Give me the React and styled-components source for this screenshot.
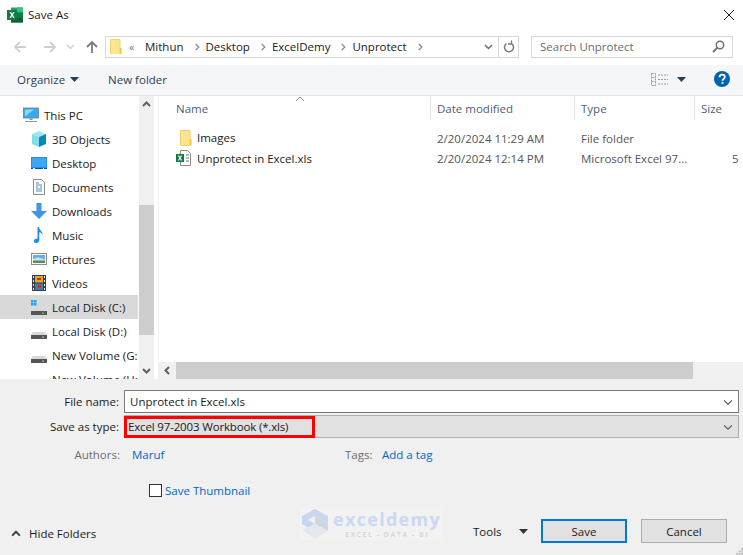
import styled, { createGlobalStyle } from "styled-components";

const Global = createGlobalStyle`
  html, body {
    margin: 0;
    padding: 0;
    background: #fff;
  }
  * {
    box-sizing: border-box;
  }
  svg {
    flex: none;
  }
`;

const Dialog = styled.div`
  position: relative;
  width: 743px;
  height: 555px;
  overflow: hidden;
  display: flex;
  flex-direction: column;
  background: #fff;
  color: #1a1a1a;
  font-family: "Open Sans", "Noto Sans", sans-serif;
  font-size: 11.5px;
`;

const TitleBar = styled.div`
  height: 32px;
  flex: none;
  display: flex;
  align-items: center;
  padding: 0 7px 3px;
  gap: 5px;
  font-size: 11.5px;
`;

const Close = styled.svg`
  margin-left: auto;
  margin-right: 1px;
`;

const NavBar = styled.div`
  height: 33px;
  flex: none;
  display: flex;
  align-items: center;
  padding: 0 10px 4px 12px;
`;

const NavIcons = styled.div`
  width: 93px;
  flex: none;
  display: flex;
  align-items: center;
`;

const Spacer = styled.span`
  width: ${(props) => props.$w}px;
  flex: none;
`;

const AddressBox = styled.div`
  width: 414px;
  height: 22px;
  flex: none;
  display: flex;
  align-items: center;
  border: 1px solid #d9d9d9;
  padding-left: 4px;
`;

const Crumb = styled.span`
  display: inline-flex;
  align-items: center;
`;

const CrumbLabel = styled.span`
  margin-right: 9px;
`;

const Chevron = styled.span`
  width: 13px;
  display: inline-flex;
  color: #777;
`;

const Overflow = styled.span`
  width: 16px;
  margin-left: 2px;
  font-size: 11px;
  color: #777;
`;

const AddressEnd = styled.div`
  margin-left: auto;
  height: 100%;
  display: flex;
  align-items: center;
`;

const Refresh = styled.div`
  width: 20px;
  height: 100%;
  border-left: 1px solid #d9d9d9;
  display: flex;
  align-items: center;
  justify-content: center;
  margin-left: 5px;
`;

const SearchBox = styled.div`
  width: 202px;
  height: 22px;
  flex: none;
  margin-left: 12px;
  display: flex;
  align-items: center;
  justify-content: space-between;
  border: 1px solid #d9d9d9;
  padding: 0 7px 0 8px;
  color: #6d6d6d;
`;

const Toolbar = styled.div`
  height: 31px;
  flex: none;
  display: flex;
  align-items: center;
  background: #f5f6f7;
  border-bottom: 1px solid #e5e5e5;
  padding: 0 13px 2px 17px;
  color: #263f5c;
`;

const ToolLabel = styled.span`
  margin-right: ${(props) => props.$right || 0}px;
  margin-left: ${(props) => props.$left || 0}px;
`;

const ToolEnd = styled.div`
  margin-left: auto;
  display: flex;
  align-items: center;
`;

const Browser = styled.div`
  height: 283px;
  flex: none;
  display: flex;
`;

const Sidebar = styled.div`
  width: 139px;
  flex: none;
  overflow: hidden;
  padding-top: 7px;
`;

const SideItem = styled.div`
  width: 138px;
  height: 24px;
  display: flex;
  align-items: center;
  padding-left: ${(props) => (props.$root ? 23 : 31)}px;
  gap: 5px;
  white-space: nowrap;
  overflow: hidden;
  background: ${(props) => (props.$active ? "#d9d9d9" : "transparent")};
`;

const VScroll = styled.div`
  width: 15px;
  flex: none;
  display: flex;
  flex-direction: column;
  align-items: center;
  background: #f0f0f0;
`;

const VThumb = styled.div`
  width: 100%;
  height: 130px;
  margin-top: 92px;
  background: #cdcdcd;
`;

const ScrollBtn = styled.div`
  height: 17px;
  width: 100%;
  flex: none;
  display: flex;
  align-items: center;
  justify-content: center;
  margin-top: ${(props) => (props.$end ? "auto" : 0)};
`;

const Main = styled.div`
  flex: 1;
  min-width: 0;
  margin-left: 4px;
  border-left: 1px solid #f0f0f0;
  display: flex;
  flex-direction: column;
`;

const HeaderRow = styled.div`
  position: relative;
  height: 24px;
  flex: none;
  display: flex;
  color: #4c607a;
`;

const SortCaret = styled.svg`
  position: absolute;
  left: 136px;
  top: 0;
`;

const HeaderCell = styled.div`
  width: ${(props) => props.$w}px;
  flex: none;
  display: flex;
  align-items: center;
  padding-left: ${(props) => props.$pad}px;
  border-right: ${(props) => (props.$last ? "none" : "1px solid #e5e5e5")};
`;

const FileList = styled.div`
  flex: 1;
  padding-top: 8px;
`;

const FileRow = styled.div`
  height: 20px;
  display: flex;
  align-items: center;
  white-space: nowrap;
`;

const FileCell = styled.div`
  width: ${(props) => props.$w}px;
  flex: none;
  display: flex;
  align-items: center;
  gap: 5px;
  padding-left: ${(props) => props.$pad}px;
  color: ${(props) => props.$color || "#1a1a1a"};
  overflow: hidden;
`;

const HScroll = styled.div`
  height: 17px;
  flex: none;
  display: flex;
  align-items: center;
  background: #f0f0f0;
`;

const HThumb = styled.div`
  width: 517px;
  height: 100%;
  background: #cdcdcd;
`;

const HBtn = styled.div`
  width: 17px;
  height: 100%;
  flex: none;
  display: flex;
  align-items: center;
  justify-content: center;
`;

const Footer = styled.div`
  flex: 1;
  background: #f0f0f0;
  padding-top: 11px;
`;

const FormRow = styled.div`
  height: 23px;
  display: flex;
  align-items: center;
  margin-bottom: 2px;
`;

const FormLabel = styled.label`
  width: 119px;
  flex: none;
  text-align: right;
`;

const Field = styled.div`
  position: relative;
  width: 615px;
  height: 23px;
  margin-left: 5px;
  display: flex;
  align-items: center;
  justify-content: space-between;
  padding: 0 5px 0 ${(props) => (props.$select ? 3 : 5)}px;
  background: ${(props) => (props.$select ? "#e1e1e1" : "#fff")};
  border: 1px solid ${(props) => (props.$select ? "#adadad" : "#7a7a7a")};
`;

const SelectValue = styled.span`
  letter-spacing: -0.16px;
`;

const Callout = styled.div`
  position: absolute;
  left: -1px;
  top: 0;
  width: 191px;
  height: 22px;
  border: 3px solid #fe0000;
`;

const MetaRow = styled.div`
  height: 18px;
  margin-top: 7px;
  display: flex;
  align-items: center;
  color: #6d6d6d;
`;

const MetaLabel = styled.span`
  width: ${(props) => props.$w}px;
  flex: none;
  text-align: ${(props) => props.$align || "right"};
`;

const MetaLink = styled.span`
  width: ${(props) => props.$w}px;
  flex: none;
  margin-left: ${(props) => props.$gap}px;
  color: #0066cc;
`;

const ThumbRow = styled.div`
  height: 18px;
  margin-top: 18px;
  padding-left: 149px;
  display: flex;
  align-items: center;
  gap: 3px;
  color: #0066cc;
`;

const CheckBox = styled.span`
  width: 13px;
  height: 13px;
  background: #fff;
  border: 1px solid #333;
`;

const BottomBar = styled.div`
  height: 24px;
  margin-top: 20px;
  display: flex;
  align-items: center;
  padding-left: 11px;
`;

const HideFolders = styled.div`
  display: flex;
  align-items: center;
  gap: 8px;
  margin-top: 5px;
  width: 95px;
  flex: none;
  white-space: nowrap;
`;

const ToolsMenu = styled.div`
  margin-left: 367px;
  width: 68px;
  flex: none;
  display: flex;
  align-items: center;
  gap: 17px;
`;

const Button = styled.button`
  width: 86px;
  height: 24px;
  flex: none;
  margin-right: 14px;
  padding: 0;
  font: inherit;
  color: #1a1a1a;
  background: #e1e1e1;
  border: ${(props) => (props.$primary ? "2px solid #0078d7" : "1px solid #adadad")};
`;

const Watermark = styled.div`
  position: absolute;
  left: 300px;
  top: 508px;
  width: 142px;
  height: 32px;
  display: flex;
  align-items: center;
  gap: 3px;
  background: #f2f2f2;
`;

const WatermarkText = styled.div`
  display: flex;
  flex-direction: column;
  align-items: center;
  gap: 3px;
  font-family: "Open Sans", sans-serif;
`;

const WatermarkName = styled.span`
  font-size: 18px;
  line-height: 18px;
  font-weight: 700;
  letter-spacing: 1.3px;
  color: #cbd8f0;
`;

const WatermarkTag = styled.span`
  font-size: 7px;
  line-height: 8px;
  font-weight: 700;
  letter-spacing: 1.5px;
  color: #d5d8dc;
`;

const Grip = styled.svg`
  position: absolute;
  right: 0;
  bottom: 0;
`;

const ExcelIcon = () => (
  <svg width="16" height="16" viewBox="0 0 16 16">
    <rect x="4" y="0.5" width="12" height="15" fill="#21a366" />
    <rect x="10" y="0.5" width="6" height="5" fill="#33c481" />
    <rect x="4" y="10.5" width="12" height="5" fill="#185c37" />
    <rect x="10" y="5.5" width="6" height="5" fill="#107c41" />
    <rect x="0" y="3" width="10" height="10" fill="#107c41" />
    <path d="M2.6 5h1.5l1 2 1-2h1.4L6 8l1.6 3H6.1L5 9 3.9 11H2.5L4.200 8z" fill="#fff" />
  </svg>
);

const FolderIcon = ({ size = 12 }) => (
  <svg width={size} height={size * 1.33} viewBox="0 0 12 16">
    <path d="M0.500 0.500h9.500v15H0.500z" fill="#fde58f" stroke="#f2d16b" />
    <path d="M10 9h1.500v6.500H10z" fill="#f0c443" />
  </svg>
);

const PcIcon = () => (
  <svg width="16" height="16" viewBox="0 0 16 16">
    <rect x="0.500" y="1" width="15" height="10" fill="#38a9f4" stroke="#6c7c8c" strokeWidth="0.800" />
    <path d="M2 2.500h9l-9 7z" fill="#8fd6fa" />
    <path d="M6.500 11.500h3v1.500h-3zM2 14h12v1H2z" fill="#8a96a3" />
  </svg>
);

const CubeIcon = () => (
  <svg width="16" height="16" viewBox="0 0 16 16">
    <path d="M8 0l7 3-7 3-7-3z" fill="#9be8ee" />
    <path d="M1 3l7 3v10l-7-3z" fill="#7edde6" />
    <path d="M15 3L8 6v10l7-3z" fill="#0b86b9" />
  </svg>
);

const DesktopIcon = () => (
  <svg width="16" height="12" viewBox="0 0 16 12">
    <rect width="16" height="12" fill="#1c8fe8" />
    <path d="M1 1h14v9H1z" fill="#3ea6f2" />
    <path d="M0 11h16v1H0z" fill="#0c4f8a" />
    <path d="M2 11h2v1H2zM12 11h1v1h-1z" fill="#e8f4ff" />
  </svg>
);

const DocIcon = () => (
  <svg width="16" height="16" viewBox="0 0 16 16">
    <path d="M2.500 0.500h8l3 3v12h-11z" fill="#fbfbfb" stroke="#8c8c8c" />
    <path d="M5 4h3M5 6h6M5 8h2M9 8h2M5 10h6M5 12h6" stroke="#4a7fb0" strokeWidth="0.900" />
  </svg>
);

const DownloadIcon = () => (
  <svg width="16" height="16" viewBox="0 0 16 16">
    <path d="M5.500 0h5v8H16l-8 8-8-8h5.500z" fill="#3f96e4" />
  </svg>
);

const MusicIcon = () => (
  <svg width="16" height="16" viewBox="0 0 16 16">
    <path d="M6.500 0h1.500c0 3 4 4 3.500 8-.5-1.500-2-2.500-3.200-2.700V13c0 1.800-1.500 3-3.300 3S3 15 3 13.700 4.500 11.400 6.500 11.500z" fill="#1e8fe6" />
  </svg>
);

const PicturesIcon = () => (
  <svg width="16" height="12" viewBox="0 0 16 12">
    <rect x="0.500" y="0.500" width="15" height="11" fill="#fff" stroke="#8d8d8d" />
    <rect x="2" y="2" width="12" height="4" fill="#62b3e8" />
    <rect x="2" y="6" width="12" height="4" fill="#5c8a5e" />
    <path d="M2 6l5-1.500L14 6.500v1H2z" fill="#d4e3e8" />
  </svg>
);

const VideoIcon = () => (
  <svg width="16" height="16" viewBox="0 0 14 16">
    <rect width="14" height="16" fill="#3a3f45" />
    <rect x="3" y="1" width="8" height="6.500" fill="#e5a524" />
    <rect x="3" y="8.500" width="8" height="6.500" fill="#3d7fb5" />
    <path d="M1 1h1v2H1zM1 5h1v2H1zM1 9h1v2H1zM1 13h1v2H1zM12 1h1v2h-1zM12 5h1v2h-1zM12 9h1v2h-1zM12 13h1v2h-1z" fill="#e8e8e8" />
    <path d="M5 3h4v2H5zM6 10h3v3H6z" fill="#b53b2c" />
  </svg>
);

const DiskIcon = ({ windows }) => (
  <svg width="16" height="16" viewBox="0 0 16 16">
    {windows && <path d="M0 1h2.500v2.500H0zM3 1h2.500v2.500H3zM0 4h2.500v2.500H0zM3 4h2.500v2.500H3z" fill="#12a5f4" />}
    <path d="M2 9h12l2 3H0z" fill="#d8d8d8" />
    <rect x="0" y="12" width="16" height="4" fill="#555" />
    <rect x="11" y="13.500" width="2" height="1.200" fill="#5fe35f" />
  </svg>
);

const XlsFileIcon = () => (
  <svg width="16" height="16" viewBox="0 0 16 16">
    <path d="M4.500 0.500h7l3 3v12h-10z" fill="#fff" stroke="#8c8c8c" />
    <path d="M10 5h3M10 8h3M10 11h3" stroke="#6f6f6f" />
    <rect x="0" y="4" width="8" height="8" fill="#107c41" />
    <path d="M1.800 5.500h1.300l.9 1.600.9-1.600h1.300L4.700 8l1.500 2.500H4.900L4 8.900l-.9 1.600H1.800L3.300 8z" fill="#fff" />
  </svg>
);

const Arrow = ({ dir, color }) => (
  <svg width="16" height="16" viewBox="0 0 16 16">
    <path
      d={dir === "left" ? "M14 8H3M8 3L3 8l5 5" : dir === "right" ? "M2 8h11M8 3l5 5-5 5" : "M8 14V3M3 8l5-5 5 5"}
      stroke={color}
      strokeWidth="1.800"
      fill="none"
    />
  </svg>
);

const SmallChevron = ({ dir = "down", color = "#6d6d6d", w = 9, sw = 1.500 }) => {
  const paths = {
    down: "M1 3l3.500 3.500L8 3",
    up: "M1 6l3.500-3.500L8 6",
    left: "M6 1L2.500 4.500 6 8",
    right: "M3 1l3.500 3.500L3 8",
  };
  return (
    <svg width={w} height={w} viewBox="0 0 9 9">
      <path d={paths[dir]} stroke={color} strokeWidth={sw} fill="none" />
    </svg>
  );
};

const Caret = ({ color = "#1a1a1a" }) => (
  <svg width="9" height="5" viewBox="0 0 9 5">
    <path d="M0 0h9L4.500 5z" fill={color} />
  </svg>
);

const places = [
  { name: "3D Objects", icon: <CubeIcon /> },
  { name: "Desktop", icon: <DesktopIcon /> },
  { name: "Documents", icon: <DocIcon /> },
  { name: "Downloads", icon: <DownloadIcon /> },
  { name: "Music", icon: <MusicIcon /> },
  { name: "Pictures", icon: <PicturesIcon /> },
  { name: "Videos", icon: <VideoIcon /> },
  { name: "Local Disk (C:)", icon: <DiskIcon windows />, active: true },
  { name: "Local Disk (D:)", icon: <DiskIcon /> },
  { name: "New Volume (G:)", icon: <DiskIcon /> },
  { name: "New Volume (H:)", icon: <DiskIcon /> },
];

const files = [
  { name: "Images", date: "2/20/2024 11:29 AM", type: "File folder", size: "", pad: 21, icon: <FolderIcon size={12} /> },
  { name: "Unprotect in Excel.xls", date: "2/20/2024 12:14 PM", type: "Microsoft Excel 97...", size: "5", pad: 17, icon: <XlsFileIcon /> },
];

const crumbs = ["Mithun", "Desktop", "ExcelDemy", "Unprotect"];

const App = () => {
  return (
    <Dialog>
      <Global />
      <TitleBar>
        <ExcelIcon />
        <span>Save As</span>
        <Close width="12" height="12" viewBox="0 0 12 12">
          <path d="M1 1l10 10M11 1L1 11" stroke="#222" strokeWidth="1" fill="none" />
        </Close>
      </TitleBar>

      <NavBar>
        <NavIcons>
          <Arrow dir="left" color="#d0d0d0" />
          <Spacer $w={14} />
          <Arrow dir="right" color="#d0d0d0" />
          <Spacer $w={8} />
          <SmallChevron color="#d0d0d0" />
          <Spacer $w={9} />
          <Arrow dir="up" color="#7a7a7a" />
        </NavIcons>
        <AddressBox>
          <FolderIcon size={12} />
          <Spacer $w={5} />
          <Overflow>«</Overflow>
          {crumbs.map((crumb) => (
            <Crumb key={crumb}>
              <CrumbLabel>{crumb}</CrumbLabel>
              <Chevron>
                <SmallChevron dir="right" color="#8a8a8a" w={8} />
              </Chevron>
            </Crumb>
          ))}
          <AddressEnd>
            <SmallChevron color="#6d6d6d" />
            <Refresh>
              <svg width="12" height="13" viewBox="0 0 12 13">
                <path d="M3.500 3.500a4.500 4.500 0 1 0 5 0" stroke="#7a7a7a" strokeWidth="1.500" fill="none" />
                <path d="M8.500 0.500v3.500H5" stroke="#7a7a7a" strokeWidth="1.300" fill="none" />
              </svg>
            </Refresh>
          </AddressEnd>
        </AddressBox>
        <SearchBox>
          <span>Search Unprotect</span>
          <svg width="13" height="13" viewBox="0 0 13 13">
            <circle cx="8" cy="5" r="3.700" stroke="#6d6d6d" strokeWidth="1.500" fill="none" />
            <path d="M5.300 7.700L1 12" stroke="#6d6d6d" strokeWidth="1.800" />
          </svg>
        </SearchBox>
      </NavBar>

      <Toolbar>
        <ToolLabel $right={5}>Organize</ToolLabel>
        <Caret color="#263f5c" />
        <ToolLabel $left={29}>New folder</ToolLabel>
        <ToolEnd>
          <svg width="17" height="15" viewBox="0 0 17 15">
            <path d="M0.500 1.500h4v12h-4zM0.500 5.500h4M0.500 9.500h4M7 3h10M7 7.500h10M7 12h10" stroke="#9a9a9a" fill="none" strokeDasharray="2 1" />
          </svg>
          <Spacer $w={9} />
          <Caret color="#263f5c" />
          <Spacer $w={28} />
          <svg width="16" height="16" viewBox="0 0 16 16">
            <circle cx="8" cy="8" r="8" fill="#0063b1" />
            <path d="M5.500 6.200C5.500 4.700 6.600 3.600 8.200 3.600s2.600 1 2.600 2.300c0 2-2.300 2-2.300 3.900M8.500 11v1.800" stroke="#fff" strokeWidth="1.800" fill="none" />
          </svg>
        </ToolEnd>
      </Toolbar>

      <Browser>
        <Sidebar>
          <SideItem $root>
            <PcIcon />
            <span>This PC</span>
          </SideItem>
          {places.map((place) => (
            <SideItem key={place.name} $active={place.active}>
              {place.icon}
              <span>{place.name}</span>
            </SideItem>
          ))}
        </Sidebar>
        <VScroll>
          <ScrollBtn>
            <SmallChevron dir="up" color="#606060" sw={2} />
          </ScrollBtn>
          <VThumb />
          <ScrollBtn $end>
            <SmallChevron dir="down" color="#606060" sw={2} />
          </ScrollBtn>
        </VScroll>
        <Main>
          <HeaderRow>
            <SortCaret width="10" height="6" viewBox="0 0 10 6">
              <path d="M1 5l4-4 4 4" stroke="#8a8a8a" fill="none" />
            </SortCaret>
            <HeaderCell $w={272} $pad={17}>Name</HeaderCell>
            <HeaderCell $w={144} $pad={6}>Date modified</HeaderCell>
            <HeaderCell $w={120} $pad={6}>Type</HeaderCell>
            <HeaderCell $w={48} $pad={6} $last>Size</HeaderCell>
          </HeaderRow>
          <FileList>
            {files.map((file) => (
              <FileRow key={file.name}>
                <FileCell $w={272} $pad={file.pad}>
                  {file.icon}
                  <span>{file.name}</span>
                </FileCell>
                <FileCell $w={144} $pad={6} $color="#555">{file.date}</FileCell>
                <FileCell $w={120} $pad={6} $color="#555">{file.type}</FileCell>
                <FileCell $w={48} $pad={37} $color="#555">{file.size}</FileCell>
              </FileRow>
            ))}
          </FileList>
          <HScroll>
            <HBtn>
              <SmallChevron dir="left" color="#606060" sw={2} />
            </HBtn>
            <HThumb />
          </HScroll>
        </Main>
      </Browser>

      <Footer>
        <FormRow>
          <FormLabel>File name:</FormLabel>
          <Field>
            <span>Unprotect in Excel.xls</span>
            <SmallChevron color="#555" sw={1} w={10} />
          </Field>
        </FormRow>
        <FormRow>
          <FormLabel>Save as type:</FormLabel>
          <Field $select>
            <SelectValue>Excel 97-2003 Workbook (*.xls)</SelectValue>
            <SmallChevron color="#555" sw={1} w={10} />
            <Callout />
          </Field>
        </FormRow>
        <MetaRow>
          <MetaLabel $w={120}>Authors:</MetaLabel>
          <MetaLink $w={213} $gap={12}>Maruf</MetaLink>
          <MetaLabel $w={37} $align="left">Tags:</MetaLabel>
          <MetaLink $w={100} $gap={0}>Add a tag</MetaLink>
        </MetaRow>
        <ThumbRow>
          <CheckBox />
          <span>Save Thumbnail</span>
        </ThumbRow>
        <BottomBar>
          <HideFolders>
            <SmallChevron dir="up" color="#444" sw={1.800} w={10} />
            <span>Hide Folders</span>
          </HideFolders>
          <ToolsMenu>
            <span>Tools</span>
            <Caret color="#333" />
          </ToolsMenu>
          <Button $primary>Save</Button>
          <Button>Cancel</Button>
        </BottomBar>
      </Footer>

      <Watermark>
        <svg width="30" height="32" viewBox="0 0 30 32">
          <path d="M15 1l13 7v7l-13-7-13 7V8z" fill="#c9d6ee" />
          <path d="M15 8l13 7v8l-13-7z" fill="#cfd6dd" />
          <path d="M2 8l13 8v8L2 16z" fill="#c6d5f2" />
          <path d="M2 22l13-6 13 7-13 8z" fill="#e3e9ee" />
        </svg>
        <WatermarkText>
          <WatermarkName>exceldemy</WatermarkName>
          <WatermarkTag>EXCEL - DATA - BI</WatermarkTag>
        </WatermarkText>
      </Watermark>

      <Grip width="7" height="7" viewBox="0 0 7 7">
        <path d="M5 0h2v2H5zM2.500 2.500h2v2h-2zM5 2.500h2v2H5zM0 5h2v2H0zM2.500 5h2v2h-2zM5 5h2v2H5z" fill="#c4c4c4" />
      </Grip>
    </Dialog>
  );
};

export default App;
